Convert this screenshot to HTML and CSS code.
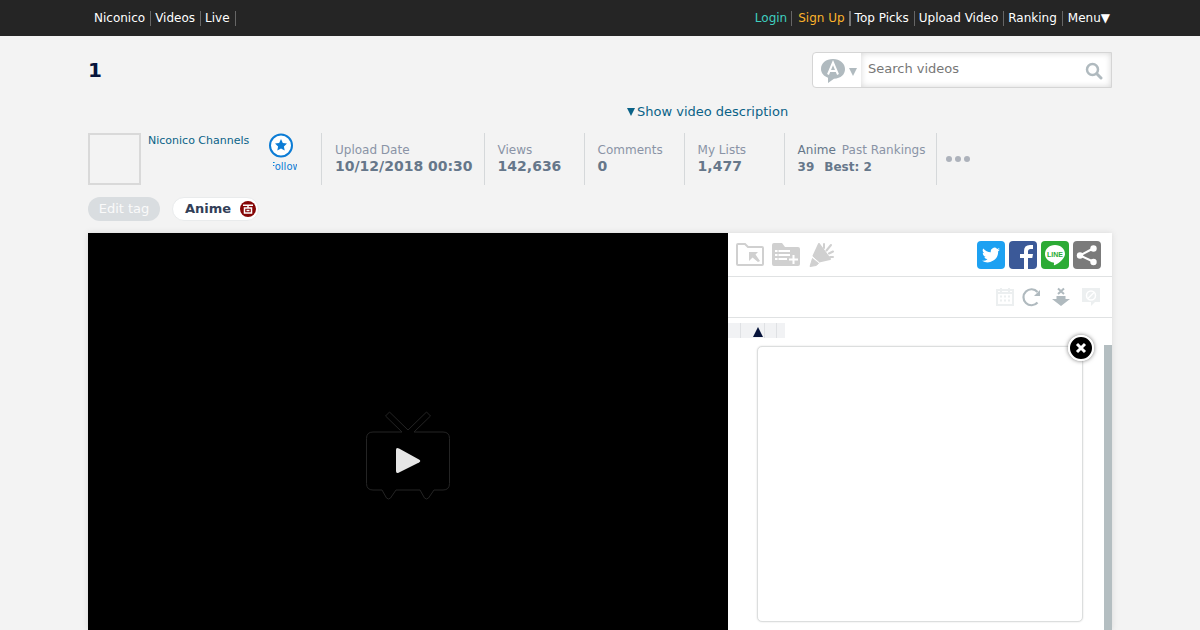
FILE: index.html
```html
<!DOCTYPE html>
<html lang="en">
<head>
<meta charset="utf-8">
<meta name="viewport" content="width=device-width, initial-scale=1">
<title>1 - Niconico Video</title>
<link rel="stylesheet" href="styles.css">
</head>
<body>
<header class="topbar">
  <div class="wrap topbar-inner">
    <nav class="nav">
      <a href="#">Niconico</a><a href="#">Videos</a><a href="#">Live</a>
    </nav>
    <nav class="nav nav-right">
      <a class="login" href="#">Login</a><a class="signup" href="#">Sign Up</a><a href="#">Top Picks</a><a href="#">Upload Video</a><a href="#">Ranking</a><button type="button">Menu▼</button>
    </nav>
  </div>
</header>
<main class="wrap main">
  <div class="title-row">
    <h1>1</h1>
    <form class="search">
      <button class="search-type" type="button" aria-label="Search type">
        <svg width="48" height="34" viewBox="0 0 48 34"><path d="M20 6C13 6 8 10 8 16c0 4 3 7.300 7 8.700V30l6-4.300C28 25.500 32 21.500 32 16S27 6 20 6z" fill="#b0babf"/><path d="M15 21.500 20 9.500l5 12M16.500 18h7" fill="none" stroke="#fff" stroke-width="2"/><path d="M36 15h8l-4 8z" fill="#b0babf"/></svg>
      </button>
      <input type="text" placeholder="Search videos" aria-label="Search videos">
      <button class="search-go" type="submit" aria-label="Search">
        <svg width="18" height="18" viewBox="0 0 18 18" fill="none" stroke="#b0babf"><circle cx="7.500" cy="7.500" r="5.500" stroke-width="2.500"/><path d="m12 12 4 4" stroke-width="3" stroke-linecap="round"/></svg>
      </button>
    </form>
  </div>
  <div class="description"><button type="button"><svg width="8" height="8" viewBox="0 0 8 8"><path d="M0 0h8L4 8z" fill="currentColor"/></svg>Show video description</button></div>
  <section class="info">
    <div class="channel">
      <div class="thumb"></div>
      <a class="channel-name" href="#">Niconico Channels</a>
      <button class="follow" type="button">
        <svg width="26" height="26" viewBox="0 0 26 26"><circle cx="13" cy="12.500" r="11" fill="#fff" stroke="#0c7cd5" stroke-width="2"/><path d="m13 6 1.800 4 4.200.5-3.100 2.900.8 4.200-3.700-2.100-3.700 2.100.8-4.200L7 10.500l4.200-.5z" fill="#0c7cd5"/></svg>
        <span>Follow</span>
      </button>
    </div>
    <dl class="stats">
      <div><dt>Upload Date</dt><dd>10/12/2018 00:30</dd></div>
      <div><dt>Views</dt><dd>142,636</dd></div>
      <div><dt>Comments</dt><dd>0</dd></div>
      <div><dt>My Lists</dt><dd>1,477</dd></div>
      <div><dt><a href="#">Anime</a>Past Rankings</dt><dd class="rank"><span>39</span><span>Best: 2</span></dd></div>
    </dl>
    <button class="more" type="button" aria-label="More"><svg width="26" height="8" viewBox="0 0 26 8" fill="#adb2bb"><circle cx="4" cy="4" r="3"/><circle cx="13" cy="4" r="3"/><circle cx="22" cy="4" r="3"/></svg></button>
  </section>
  <div class="tags">
    <button class="edit-tag" type="button">Edit tag</button>
    <div class="tag"><a href="#">Anime</a>
      <a class="dict" href="#" aria-label="Encyclopedia"><svg width="16" height="16" viewBox="0 0 16 16"><circle cx="8" cy="8" r="8" fill="#850606"/><path d="M3 4.200h10M8 4v3M4.500 7h7v5h-7zM6.500 9.500h3" fill="none" stroke="#fff" stroke-width="1.500"/></svg></a>
    </div>
  </div>
  <section class="player">
    <div class="video">
      <button type="button" aria-label="Play">
        <svg width="88" height="92" viewBox="0 0 88 92"><path d="M38 22 21.500 6l4-4L44 20 62.500 2l4 4L50 22h29q6.500 0 6.500 6.500v45q0 6.500-6.500 6.500h-9l-5.500 8q-2 2-4 0L56 80H32l-5.500 8q-2 2-4 0L18 80H9q-6.500 0-6.500-6.500v-45Q2.500 22 9 22z" fill="#000" stroke="#242424"/><path d="M32 40v21q0 3 3 1.500l20-10q2.500-1.500 0-3l-20-11q-3-1.500-3 1.500z" fill="#e6e6e6"/></svg>
      </button>
    </div>
    <aside class="panel">
      <div class="panel-row">
        <div class="icons save">
          <button type="button" aria-label="Save for later"><svg width="28" height="24" viewBox="0 0 28 24"><path d="M1 21V2q0-1 1-1h7l3 3h14q1 0 1 1v16q0 1-1 1H2q-1 0-1-1z" fill="none" stroke="#d0d0d0" stroke-width="2"/><path d="M13 9h9l-2.500 2.500L24 18l-2 1-5.500-4.500L13 18z" fill="#d0d0d0"/></svg></button>
          <button type="button" aria-label="Add to list"><svg width="28" height="24" viewBox="0 0 28 24"><path d="M2 0h8l3 4h13q2 0 2 2v15q0 2-2 2H2q-2 0-2-2V2q0-2 2-2z" fill="#d0d0d0"/><path d="M3 8h15M3 12h15M3 16h12M17 16.500h9M21.500 12v9" stroke="#fff" stroke-width="2"/><path d="M6 6v13" stroke="#d0d0d0"/></svg></button>
          <button type="button" aria-label="Advertise"><svg width="28" height="24" viewBox="0 0 28 24"><path d="M11 1 22 16 11 18.500 5.500 13z" fill="#d0d0d0" stroke="#d0d0d0" stroke-width="2" stroke-linejoin="round"/><path d="m4.500 15.500 6 5L8 22.500l-6 1L4 17z" fill="#d0d0d0" stroke="#d0d0d0" stroke-linejoin="round"/><path d="m4 13.500 7 6" stroke="#fff"/><path d="M16 5V1M18.500 7.500 23 2M21 10.500l4-2M22 14h3" stroke="#d0d0d0" stroke-width="2" stroke-linecap="round"/></svg></button>
        </div>
        <div class="icons share">
          <a href="#" class="twitter" aria-label="Twitter"><svg width="28" height="28" viewBox="0 0 28 28"><path transform="translate(5 5) scale(.75)" d="M24 4.600a10 10 0 0 1-2.800.8 5 5 0 0 0 2.100-2.700 10 10 0 0 1-3.100 1.200 4.900 4.900 0 0 0-8.400 4.500A14 14 0 0 1 1.700 3.200a4.900 4.900 0 0 0 1.500 6.500 5 5 0 0 1-2.200-.6 4.900 4.900 0 0 0 3.900 4.900 5 5 0 0 1-2.200.1 4.900 4.900 0 0 0 4.600 3.400A9.900 9.900 0 0 1 0 19.500 14 14 0 0 0 21.500 7c1-.7 1.800-1.500 2.500-2.400z" fill="#fff"/></svg></a>
          <a href="#" class="facebook" aria-label="Facebook"><svg width="28" height="28" viewBox="0 0 28 28"><path d="M15 28V17h-4v-4h4v-3q0-6 6-6h3v4h-2.500Q19 8 19 10.500V13h5l-.7 4H19v11z" fill="#fff"/></svg></a>
          <a href="#" class="line" aria-label="LINE"><svg width="28" height="28" viewBox="0 0 28 28"><path d="M14 4C8 4 4 8 4 13c0 4.500 4 8 8.500 8.500.8.200.5 1.500.3 2.600.5 1 11.200-5.100 11.200-11.100C24 8 20 4 14 4z" fill="#fff"/><text x="14" y="15.500" text-anchor="middle" font-size="7" font-weight="bold" fill="#2cab35" font-family="Liberation Sans, sans-serif">LINE</text></svg></a>
          <a href="#" class="other" aria-label="Share"><svg width="28" height="28" viewBox="0 0 28 28"><path d="M21 7 7 14.500 21 21" fill="none" stroke="#fff" stroke-width="2"/><g fill="#fff"><circle cx="20.500" cy="7.500" r="3.200"/><circle cx="7" cy="14.500" r="3.200"/><circle cx="20.500" cy="21" r="3.200"/></g></svg></a>
        </div>
      </div>
      <div class="panel-row tools">
        <button type="button" aria-label="Comment log date"><svg width="20" height="20" viewBox="0 0 20 20" fill="none" stroke="#eceff0"><rect x="2" y="3" width="16" height="15" stroke-width="2"/><path d="M2 6h16M6 1v4M14 1v4" stroke-width="2"/><path d="M5 9.500h10M5 13.500h10" stroke-width="2" stroke-dasharray="2 2"/></svg></button>
        <button type="button" aria-label="Reload"><svg width="20" height="20" viewBox="0 0 20 20"><path d="M16.500 15.500A8 8 0 1 1 16.500 5" fill="none" stroke="#b0babf" stroke-width="2.200"/><path d="M19 3v6h-6z" fill="#b0babf"/></svg></button>
        <button type="button" aria-label="Stop scrolling"><svg width="20" height="20" viewBox="0 0 20 20"><path d="m7 1.500 6 5.500M13 1.500 7 7" stroke="#b0babf" stroke-width="2"/><path d="M5.500 9h9v3H19l-9 7-9-7h4.500z" fill="#b0babf"/></svg></button>
        <button type="button" aria-label="Comment filter"><svg width="20" height="20" viewBox="0 0 20 20"><path d="M1 1h18v14h-5l-4 4v-4H1z" fill="#eceff0"/><circle cx="10" cy="8.500" r="4.500" fill="none" stroke="#fff" stroke-width="1.500"/><path d="m7 11.500 6-6" stroke="#fff" stroke-width="1.500"/></svg></button>
      </div>
      <div class="comments">
        <div class="columns"><span></span><span><svg width="10" height="10" viewBox="0 0 10 10"><path d="m5 0 5 10H0z" fill="#07143b"/></svg></span><span></span><span></span></div>
        <div class="list"></div>
        <div class="popup"><button type="button" aria-label="Close"><svg width="26" height="26" viewBox="0 0 26 26"><circle cx="13" cy="13" r="12" fill="#000" stroke="#fff" stroke-width="2"/><path d="m9 9 8 8M17 9l-8 8" stroke="#fff" stroke-width="3"/></svg></button></div>
      </div>
    </aside>
  </section>
</main>
</body>
</html>
```
FILE: styles.css
```css
* { box-sizing: border-box; }
body {
  margin: 0;
  min-height: 100vh;
  display: flex;
  flex-direction: column;
  background: #f3f3f3;
  color: #07143b;
  font: 12px/16px "DejaVu Sans", sans-serif;
}
a { color: inherit; text-decoration: none; }
button { padding: 0; border: 0; background: none; color: inherit; font: inherit; cursor: pointer; }
svg { display: block; flex: none; }
h1, dl, dd { margin: 0; }
.wrap { width: 100%; max-width: 1024px; margin: 0 auto; }

.topbar { background: #252525; color: #fff; }
.topbar-inner { display: flex; justify-content: space-between; align-items: center; height: 36px; padding: 0 2px; }
.nav { display: flex; align-items: center; line-height: 15px; }
.nav a { padding: 0 5px 0 4px; border-right: 1px solid #666; }
.nav .login { padding-right: 4px; color: #3fcfc0; }
.nav .signup { padding: 0 4px 0 6px; border-right: 2px solid #777; color: #fcb32b; }
.nav button { padding-left: 5px; }

.main { flex: 1; display: flex; flex-direction: column; }
.title-row { display: flex; justify-content: space-between; align-items: center; padding-top: 16px; }
h1 { font-size: 20px; line-height: 24px; }
.search { position: relative; display: flex; width: 300px; height: 36px; border: 1px solid #d5d5d5; border-radius: 4px 0 0 4px; background: #fff; }
.search::after { content: ""; position: absolute; inset: 0 0 0 48px; box-shadow: inset 0 0 6px #d5d5d5; pointer-events: none; }
.search-type { width: 48px; flex: none; }
.search input { flex: 1; min-width: 0; padding: 0 0 2px 7px; border: 0; outline: 0; background: #fff; color: #333; font: 13px/16px "DejaVu Sans", sans-serif; }
.search input::placeholder { color: #777; opacity: 1; }
.search-go { width: 34px; display: grid; place-items: center; padding-top: 2px; }

.description { margin-top: 15px; padding-left: 539px; color: #0a6287; font-size: 13px; line-height: 18px; }
.description button { display: flex; align-items: center; gap: 2px; }

.info { display: flex; height: 52px; margin-top: 12px; }
.channel { display: flex; align-items: flex-start; width: 233px; }
.thumb { width: 53px; height: 52px; border: 2px solid #d9d9d9; flex: none; }
.channel-name { flex: 1; padding-left: 7px; color: #0a6287; font-size: 11px; }
.follow { width: 40px; margin-right: 13px; font-size: 10px; line-height: 14px; color: #0c7cd5; }
.follow span { display: flex; justify-content: center; width: 24px; margin: 1px 0 0 5px; overflow: hidden; }
.stats { display: flex; }
.stats > div { min-width: 100px; padding: 9px 11px 0 13px; border-left: 1px solid #d5d8da; white-space: nowrap; }
.stats > div:last-child { border-right: 1px solid #d5d8da; }
dt { color: #8a93a6; }
dt a { margin-right: 6px; color: #66778a; }
dd { color: #66778a; font-size: 14px; font-weight: bold; }
dd.rank { display: flex; gap: 10px; padding-top: 1px; font-size: 12px; }
.more { padding-left: 8px; }

.tags { display: flex; gap: 12px; margin-top: 12px; font-size: 13px; }
.edit-tag { width: 72px; height: 24px; border-radius: 12px; background: #d9dde0; color: #fafafa; }
.tag { display: flex; align-items: center; gap: 9px; height: 24px; padding: 0 2px 0 12px; border: 1px solid #e9ebec; border-radius: 12px; background: #fff; color: #333f58; font-weight: bold; }

.player { flex: 1; display: grid; grid-template-columns: 5fr 3fr; min-height: 396px; margin-top: 12px; background: #fff; box-shadow: 0 0 6px #d9d9d9; }
.video { display: flex; justify-content: center; align-items: flex-start; padding-top: 177px; background: #000; }
.panel { display: flex; flex-direction: column; min-width: 0; }
.panel-row { display: flex; justify-content: space-between; align-items: center; height: 44px; padding: 0 11px 0 8px; border-bottom: 1px solid #e0e2e3; }
.icons { display: flex; gap: 8px; }
.share { gap: 4px; }
.share a { border-radius: 4px; overflow: hidden; }
.twitter { background: #1da1f2; }
.facebook { background: #3b5998; }
.line { background: #2cab35; }
.other { background: #7b7b7b; }
.tools { height: 41px; justify-content: flex-end; gap: 10px; }
.tools button:first-child { margin-right: -4px; }
.comments { position: relative; flex: 1; display: flex; flex-direction: column; padding-top: 5px; }
.columns { display: flex; width: 57px; height: 15px; background: #f1f2f4; }
.columns span { width: 12px; border-right: 1px solid #dfe1e4; }
.columns span:first-child { width: 13px; }
.columns span:nth-child(2) { width: 24px; display: grid; place-items: end center; padding: 0 0 1px 10px; }
.columns span:last-child { width: 8px; border: 0; }
.list { flex: 1; margin-top: 7px; border-right: 8px solid #b4bec1; }
.popup { position: absolute; top: 28px; left: 29px; right: 29px; height: 276px; border: 1px solid #dcdede; border-radius: 5px; background: #fff; box-shadow: 0 0 2px #ddd; }
.popup button { position: absolute; top: -12px; right: -12px; border-radius: 50%; box-shadow: 0 0 4px #777; }
```
